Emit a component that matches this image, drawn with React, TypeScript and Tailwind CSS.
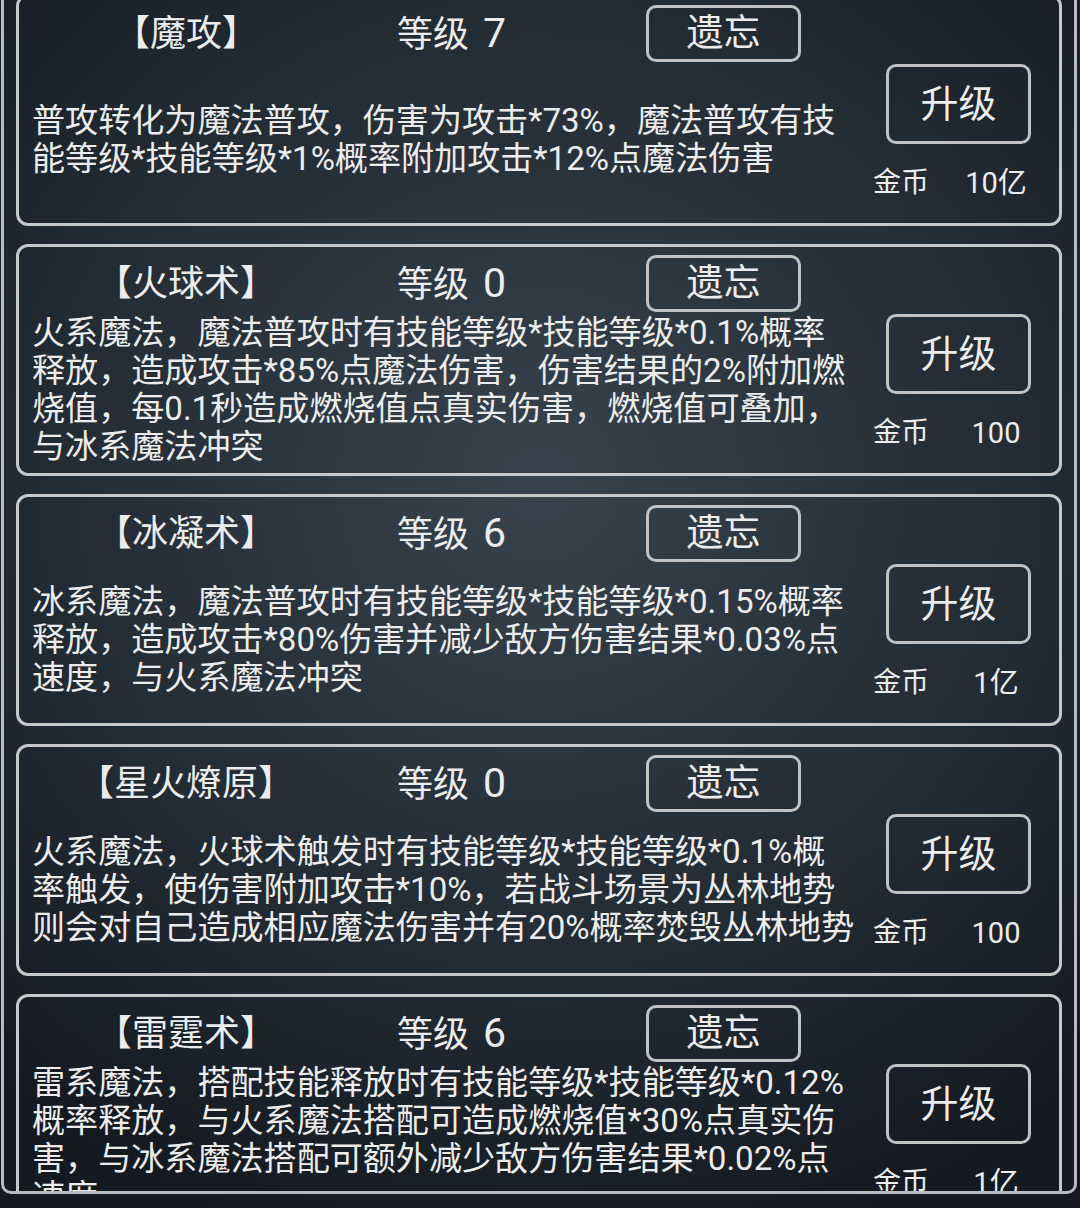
import React from 'react';

type Skill = {
  name: string;
  level: number;
  lines: string[];
  cost: string;
};

const skills: Skill[] = [
  {
    name: '【魔攻】',
    level: 7,
    lines: ['普攻转化为魔法普攻，伤害为攻击*73%，魔法普攻有技', '能等级*技能等级*1%概率附加攻击*12%点魔法伤害'],
    cost: '10亿',
  },
  {
    name: '【火球术】',
    level: 0,
    lines: [
      '火系魔法，魔法普攻时有技能等级*技能等级*0.1%概率',
      '释放，造成攻击*85%点魔法伤害，伤害结果的2%附加燃',
      '烧值，每0.1秒造成燃烧值点真实伤害，燃烧值可叠加，',
      '与冰系魔法冲突',
    ],
    cost: '100',
  },
  {
    name: '【冰凝术】',
    level: 6,
    lines: [
      '冰系魔法，魔法普攻时有技能等级*技能等级*0.15%概率',
      '释放，造成攻击*80%伤害并减少敌方伤害结果*0.03%点',
      '速度，与火系魔法冲突',
    ],
    cost: '1亿',
  },
  {
    name: '【星火燎原】',
    level: 0,
    lines: [
      '火系魔法，火球术触发时有技能等级*技能等级*0.1%概',
      '率触发，使伤害附加攻击*10%，若战斗场景为丛林地势',
      '则会对自己造成相应魔法伤害并有20%概率焚毁丛林地势',
    ],
    cost: '100',
  },
  {
    name: '【雷霆术】',
    level: 6,
    lines: [
      '雷系魔法，搭配技能释放时有技能等级*技能等级*0.12%',
      '概率释放，与火系魔法搭配可造成燃烧值*30%点真实伤',
      '害，与冰系魔法搭配可额外减少敌方伤害结果*0.02%点',
      '速度',
    ],
    cost: '1亿',
  },
];

const SkillCard = ({ skill }: { skill: Skill }) => (
  <div className="h-[232px] shrink-0 border-[3px] border-[#c6c8ca] rounded-[12px] flex">
    {/* left: title row + description */}
    <div className="flex-1 min-w-0 flex flex-col pl-[13px]">
      <div className="h-[57px] mt-[8px] flex items-center">
        <div className="w-[308px] text-center text-[36px] leading-none whitespace-nowrap">{skill.name}</div>
        <div className="w-[306px] pl-[57px] flex items-baseline text-[36px] leading-none whitespace-nowrap">
          等级<span className="ml-[14px] text-[41px]">{skill.level}</span>
        </div>
        <div className="w-[155px] h-[57px] border-[3px] border-[#c0c2c4] rounded-[10px] flex items-center justify-center text-[37px] leading-none">
          遗忘
        </div>
      </div>
      <div className="flex-1 flex flex-col justify-center pb-[5px]">
        {skill.lines.map((l, i) => (
          <div key={i} className="text-[33.1px] leading-[38px] whitespace-nowrap">
            {l}
          </div>
        ))}
      </div>
    </div>
    {/* right: upgrade + cost */}
    <div className="w-[190px] shrink-0 flex flex-col pt-[67px]">
      <div className="ml-[17px] w-[145px] h-[80px] border-[3px] border-[#c0c2c4] rounded-[10px] flex items-center justify-center text-[38px] leading-none">
        升级
      </div>
      <div className="mt-[21px] ml-[4px] flex items-center text-[28px] leading-[36px]">
        <span className="w-[92px]">金币</span>
        <span className="w-[62px] text-center whitespace-nowrap text-[29px]">{skill.cost}</span>
      </div>
    </div>
  </div>
);

export default function App() {
  return (
    <div className="w-[1080px] h-[1208px] overflow-hidden text-[#ececec] font-['Roboto','Noto_Sans_CJK_SC',sans-serif] bg-[radial-gradient(ellipse_75%_65%_at_50%_40%,#37434e_0%,#232b33_60%,#151a20_100%)]">
      <div className="w-[1076px] ml-[1px] h-[1194px] border-x-[3px] border-b-[3px] border-[#b9bbbd] rounded-b-[10px] overflow-hidden">
        <div className="-mt-[6px] flex flex-col gap-[18px] px-[12px]">
          {skills.map((s) => (
            <SkillCard key={s.name} skill={s} />
          ))}
        </div>
      </div>
    </div>
  );
}
